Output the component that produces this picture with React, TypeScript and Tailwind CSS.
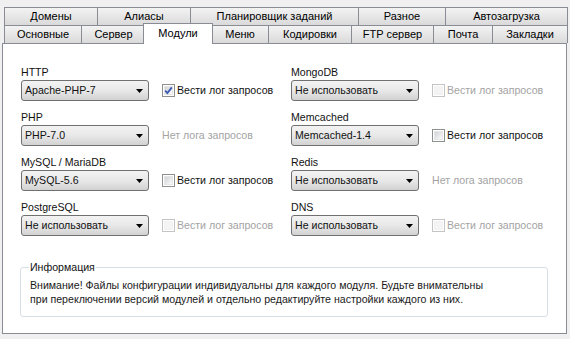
import React from 'react'

type Mod = {
  label: string
  value: string
  log: 'on' | 'off' | 'disabled' | 'none'
}

const left: Mod[] = [
  { label: 'HTTP', value: 'Apache-PHP-7', log: 'on' },
  { label: 'PHP', value: 'PHP-7.0', log: 'none' },
  { label: 'MySQL / MariaDB', value: 'MySQL-5.6', log: 'off' },
  { label: 'PostgreSQL', value: 'Не использовать', log: 'disabled' },
]

const right: Mod[] = [
  { label: 'MongoDB', value: 'Не использовать', log: 'disabled' },
  { label: 'Memcached', value: 'Memcached-1.4', log: 'off' },
  { label: 'Redis', value: 'Не использовать', log: 'none' },
  { label: 'DNS', value: 'Не использовать', log: 'disabled' },
]

const topTabs = [
  { name: 'Домены', w: 'w-[94px]' },
  { name: 'Алиасы', w: 'w-[94px]' },
  { name: 'Планировщик заданий', w: 'w-[169px]' },
  { name: 'Разное', w: 'w-[88px]' },
  { name: 'Автозагрузка', w: 'w-[123px]' },
]

const bottomTabs = [
  { name: 'Основные', w: 'w-[78px]' },
  { name: 'Сервер', w: 'w-[65px]' },
  { name: 'Модули', w: 'w-[70px]', active: true },
  { name: 'Меню', w: 'w-[58px]' },
  { name: 'Кодировки', w: 'w-[84px]' },
  { name: 'FTP сервер', w: 'w-[83px]' },
  { name: 'Почта', w: 'w-[60px]' },
  { name: 'Закладки', w: 'w-[76px]' },
]

function Tab({ name, w, first }: { name: string; w: string; first?: boolean }) {
  return (
    <div
      className={`${w} ${first ? '' : '-ml-px'} h-[18px] border-t border-x border-[#898c95] bg-linear-to-b from-[#f3f3f3] to-[#dadada] flex items-center justify-center leading-none`}
    >
      {name}
    </div>
  )
}

function Select({ value }: { value: string }) {
  return (
    <div className="w-[128px] h-[21px] rounded-[3px] border border-[#707070] bg-linear-to-b from-[#f3f3f3] via-[#e8e8e8] to-[#d2d2d2] flex items-center pl-[3px] pr-[4px] text-[#111]">
      <span className="flex-1">{value}</span>
      <svg width="7" height="4" viewBox="0 0 7 4" className="mr-[1px]">
        <path d="M0 0h7L3.5 4z" fill="#000" />
      </svg>
    </div>
  )
}

function Checkbox({ checked, disabled }: { checked?: boolean; disabled?: boolean }) {
  return (
    <span
      className={`w-[13px] h-[13px] border flex items-center justify-center bg-white ${
        disabled ? 'border-[#c4c4c4]' : 'border-[#8e8f8f]'
      }`}
    >
      <span
        className={`w-[9px] h-[9px] border relative ${
          disabled
            ? 'border-[#f2f2f2] bg-[#f4f4f4]'
            : 'border-[#e6e6e6] bg-linear-to-br from-[#cfd2d7] to-[#fbfbfb]'
        }`}
      >
        {checked && (
          <svg width="9" height="9" viewBox="0 0 9 9" className="absolute -left-px -top-px">
            <path d="M1.2 4.6 L3.4 7 L7.8 1.4" stroke="#3a5ab0" strokeWidth="1.8" fill="none" />
          </svg>
        )}
      </span>
    </span>
  )
}

function Row({ m }: { m: Mod }) {
  return (
    <div className="flex flex-col">
      <div className="h-[14px] leading-[14px] text-[#111]">{m.label}</div>
      <div className="flex items-center mt-px h-[21px]">
        <Select value={m.value} />
        <div className="ml-[13px] flex items-center">
          {m.log === 'none' ? (
            <span className="text-[#a3a3a3]">Нет лога запросов</span>
          ) : (
            <>
              <Checkbox checked={m.log === 'on'} disabled={m.log === 'disabled'} />
              <span className={`ml-[2px] ${m.log === 'disabled' ? 'text-[#a3a3a3]' : 'text-[#111]'}`}>
                Вести лог запросов
              </span>
            </>
          )}
        </div>
      </div>
    </div>
  )
}

export default function App() {
  return (
    <div
      className="w-[570px] h-[339px] bg-[#f0f0f0] text-[11px] text-black overflow-hidden"
      style={{ fontFamily: "'Liberation Sans', Arial, sans-serif" }}
    >
      {/* Tabs */}
      <div className="pt-[7px] pl-[4px]">
        <div className="flex">
          {topTabs.map((t, i) => (
            <Tab key={t.name} name={t.name} w={t.w} first={i === 0} />
          ))}
        </div>
        <div className="flex items-end h-[18px]">
          {bottomTabs.map((t, i) =>
            t.active ? (
              <div
                key={t.name}
                className={`${t.w} -ml-[3px] h-[21px] -mb-px relative z-10 bg-white border-t border-x border-[#898c95] flex items-start justify-center pt-[3px] leading-[13px]`}
              >
                {t.name}
              </div>
            ) : (
              <div
                key={t.name}
                className={`${t.w} ${i === 0 ? '' : bottomTabs[i - 1].active ? '-ml-[2px]' : '-ml-px'} h-[18px] border-t border-x border-[#898c95] bg-linear-to-b from-[#f3f3f3] to-[#dadada] flex items-center justify-center leading-none`}
              >
                {t.name}
              </div>
            )
          )}
        </div>
      </div>

      {/* Panel */}
      <div className="ml-[2px] w-[565px] h-[291px] bg-white border border-[#898c95] pl-[18px] pt-[21px] text-[10.6px]">
        <div className="grid grid-cols-[270px_1fr]">
          <div className="flex flex-col gap-[9px]">
            {left.map((m) => (
              <Row key={m.label} m={m} />
            ))}
          </div>
          <div className="flex flex-col gap-[9px]">
            {right.map((m) => (
              <Row key={m.label} m={m} />
            ))}
          </div>
        </div>

        <fieldset className="mt-[24px] -ml-px w-[528px] border border-[#d5dfe5] rounded-[3px] px-[9px] pb-[10px]">
          <legend className="px-px -ml-px leading-[14px] text-[#111]">Информация</legend>
          <p className="pt-[4px] leading-[14px] text-[#1a1a1a]">
            Внимание! Файлы конфигурации индивидуальны для каждого модуля. Будьте внимательны
            <br />
            при переключении версий модулей и отдельно редактируйте настройки каждого из них.
          </p>
        </fieldset>
      </div>
    </div>
  )
}
